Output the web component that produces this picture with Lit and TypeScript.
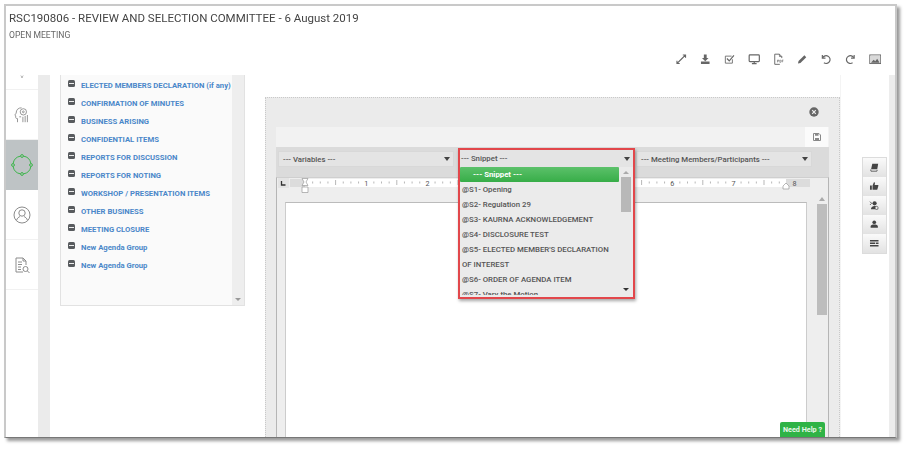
import { LitElement, html, css, svg } from "lit";
import { customElement } from "lit/decorators.js";

const agenda = [
  "ELECTED MEMBERS DECLARATION (if any)",
  "CONFIRMATION OF MINUTES",
  "BUSINESS ARISING",
  "CONFIDENTIAL ITEMS",
  "REPORTS FOR DISCUSSION",
  "REPORTS FOR NOTING",
  "WORKSHOP / PRESENTATION ITEMS",
  "OTHER BUSINESS",
  "MEETING CLOSURE",
  "New Agenda Group",
  "New Agenda Group",
];

const snippets = [
  "@S1- Opening",
  "@S2- Regulation 29",
  "@S3- KAURNA ACKNOWLEDGEMENT",
  "@S4- DISCLOSURE TEST",
  "@S5- ELECTED MEMBER'S DECLARATION OF INTEREST",
  "@S6- ORDER OF AGENDA ITEM",
  "@S7- Vary the Motion",
];

const toolIcons = [
  svg`<path d="M8 8l5-5M10 2.5h3.5V6M8 8l-5 5M2.5 10v3.5H6" fill="none" stroke="currentColor" stroke-width="1.4"/>`,
  svg`<path d="M6.2 2h3.6v4.5h2.4L8 10.5 3.8 6.5h2.4zM2.5 11h11v3h-11z" fill="currentColor"/>`,
  svg`<path d="M12 8v5H3V4h8" fill="none" stroke="currentColor" stroke-width="1.1"/><path d="M5 7l3 3 6-7" fill="none" stroke="currentColor" stroke-width="1.5"/>`,
  svg`<rect x="1.5" y="2.5" width="13" height="8.5" rx="1" fill="none" stroke="currentColor" stroke-width="1.5"/><path d="M5 13.5h6M8 11v2.5" stroke="currentColor" stroke-width="1.5"/>`,
  svg`<path d="M10 14.5H3.5v-13h6l3 3v2" fill="none" stroke="currentColor" stroke-width="1.2"/><path d="M9.5 1.5v3h3" fill="none" stroke="currentColor"/><rect x="6.5" y="8.2" width="8.5" height="4.6" fill="#fff"/><path d="M7 9v3M7 9h1.6v1.4H7M10 9v3h1c.8 0 .8-3 0-3zM13 12V9h1.6M13 10.4h1.3" fill="none" stroke="currentColor" stroke-width=".75"/>`,
  svg`<path d="M2.5 13.5l.8-3.2 7.4-7.4 2.4 2.4-7.4 7.4z" fill="currentColor"/>`,
  svg`<path d="M3 2.5v4h4" fill="none" stroke="currentColor" stroke-width="1.5"/><path d="M3.4 6.2A5 5 0 1 1 5 12.5" fill="none" stroke="currentColor" stroke-width="1.5"/>`,
  svg`<path d="M13 2.5v4H9" fill="none" stroke="currentColor" stroke-width="1.5"/><path d="M12.6 6.2A5 5 0 1 0 11 12.5" fill="none" stroke="currentColor" stroke-width="1.5"/>`,
  svg`<rect x="1" y="2.5" width="14" height="11" fill="none" stroke="currentColor" stroke-width="1.2"/><rect x="2" y="3.5" width="12" height="9" fill="#d9d9d9"/><path d="M2.5 12.5l3.5-4 2 2 2.5-3 3 5z" fill="currentColor"/>`,
];

const sideIcons = [
  svg`<path d="M5 2.500h9l-1.500 8.500H3.200z" fill="currentColor"/><path d="M2.500 11.500l.5 2.500h9l.5-2" fill="none" stroke="currentColor" stroke-width="1.200"/>`,
  svg`<path d="M1.500 7h2.800v6.500H1.500zM5.400 7l2.100-5c1.200 0 1.700.8 1.500 1.900L8.600 6H13.500c.7 0 1 .7.800 1.300L12.800 12.500c-.2.600-.6 1-1.200 1H5.400z" fill="currentColor"/>`,
  svg`<circle cx="8.500" cy="5" r="3.200" fill="currentColor"/><path d="M3 14c0-3 2-5 5.500-5s5.500 2 5.500 5z" fill="currentColor"/><path d="M1.500 2.500l2.500 2.500-2.500 2.500" fill="none" stroke="currentColor" stroke-width="1.300"/><circle cx="11.500" cy="12" r="2.400" fill="#eee" stroke="currentColor"/>`,
  svg`<circle cx="8" cy="5" r="2.800" fill="currentColor"/><path d="M2.500 13.500v-2c0-2 2.500-3 5.500-3s5.500 1 5.500 3v2z" fill="currentColor"/>`,
  svg`<path d="M1.500 3h13v2.200h-13zM1.500 6.900h8v2.200h-8zM10.700 6.900h3.800v2.200h-3.800zM1.500 10.800h13V13h-13z" fill="currentColor"/>`,
];

@customElement("app-root")
export class AppRoot extends LitElement {
  static styles = css`
    :host { display: block; width: 910px; height: 453px; background: #fff; overflow: hidden; font-family: Roboto, "Liberation Sans", sans-serif; }
    .window { position: relative; box-sizing: border-box; margin: 4px 0 0 4px; width: 893px; height: 434px; border: 2px solid #c9c9c9; border-bottom: 1px solid #777; background: #fff; box-shadow: 3px 3px 3px #9a9a9a; display: flex; flex-direction: column; filter: blur(0.35px); }
    .header { height: 69px; flex: none; position: relative; padding: 5px 0 0 3px; box-sizing: border-box; }
    .title { font-size: 11.5px; line-height: 15px; color: #444; white-space: nowrap; }
    .sub { font-size: 8.6px; line-height: 12px; margin-top: 3px; color: #666; }
    .tools { display: flex; justify-content: flex-end; gap: 11.7px; padding: 0 14px 0 0; margin-top: 12px; color: #666; }
    .tools svg { width: 12.5px; height: 12.5px; display: block; }
    .body { flex: 1; display: flex; min-height: 0; }
    .rail { width: 32px; flex: none; display: flex; flex-direction: column; }
    .cell { height: 50px; flex: none; box-sizing: border-box; border-bottom: 1px solid #f1f1f1; display: flex; align-items: center; justify-content: center; color: #8c8c8c; }
    .cell svg { width: 18px; height: 18px; display: block; }
    .cell.top { height: 15px; align-items: flex-start; font-size: 6px; color: #777; line-height: 4px; }
    .cell.sel { background: #bec3c5; border: none; }
    .cell.sel svg { width: 22px; height: 22px; }
    .strip { width: 12px; flex: none; background: #ebebeb; }
    .panel { width: 185px; height: 231px; flex: none; margin-left: 10px; box-sizing: border-box; border: 1px solid #e2e2e2; border-top: none; background: #fafafa; display: flex; }
    .list { flex: 1; min-width: 0; padding: 4px 0 0 7px; }
    .row { height: 18px; display: flex; gap: 6px; align-items: flex-start; }
    .minus { width: 7px; height: 7px; margin-top: 1px; flex: none; border-radius: 1.5px; background: #585b5e; display: flex; align-items: center; justify-content: center; }
    .minus i { display: block; width: 5px; height: 1.2px; background: #eee; }
    .row a { font-size: 7.7px; line-height: 14px; font-weight: 700; color: #4a87c9; white-space: nowrap; }
    .pscroll { width: 12px; flex: none; background: #eeeeee; display: flex; align-items: flex-end; justify-content: center; padding-bottom: 4px; box-sizing: border-box; }
    .pscroll b { border: 3px solid transparent; border-top: 3.5px solid #999; border-bottom: 0; }
    .editor { width: 575px; flex: none; margin: 22px 0 0 20px; box-sizing: border-box; background: #ebebeb; border: 1px dotted #c9c9c9; border-bottom: none; padding: 0 10px; display: flex; flex-direction: column; position: relative; }
    .close { height: 29px; flex: none; display: flex; justify-content: flex-end; align-items: center; padding: 0 10px 2px 0; box-sizing: border-box; }
    .close svg { width: 10px; height: 10px; display: block; }
    .save { height: 20px; flex: none; background: #f2f2f2; display: flex; justify-content: flex-end; padding-right: 1px; }
    .save div { width: 23px; background: #fbfbfb; display: flex; align-items: center; justify-content: center; color: #888; }
    .save svg { width: 8px; height: 8px; }
    .band { height: 30px; flex: none; background: #dbdbdb; display: flex; gap: 4px; padding: 4px 0 0 2px; box-sizing: border-box; }
    .sel-box { width: 176px; height: 16px; box-sizing: border-box; background: #e4e4e4; border: 1px solid #d8d8d8; display: flex; align-items: center; justify-content: space-between; padding: 0 3px 0 4px; font-size: 7.8px; font-weight: 500; color: #555; }
    .sel-box + .sel-box + .sel-box { margin-left: -2px; }
    .tri { border: 3.2px solid transparent; border-top: 4.5px solid #444; border-bottom: 0; }
    .frame { flex: 1; min-height: 0; box-sizing: border-box; border: 1px solid #b5b5b5; border-bottom: none; border-top-color: #cfcfcf; background: #eeeeee; padding: 0; display: flex; flex-direction: column; }
    .ruler { height: 16px; flex: none; display: block; margin-bottom: 8px; }
    .doc { flex: 1; display: flex; min-height: 0; padding-left: 8px; }
    .page { width: 522px; flex: none; box-sizing: border-box; background: #fff; border-top: 1.5px solid #bbb; border-left: 1px solid #ccc; border-right: 1px solid #ccc; }
    .dscroll { width: 10px; flex: none; margin: -5px 0 0 10px; display: flex; flex-direction: column; align-items: center; }
    .dscroll .up { border: 3.5px solid transparent; border-bottom: 4px solid #aaa; border-top: 0; margin-bottom: 3px; }
    .dscroll .th { width: 10px; height: 111px; background: #bdbdbd; }
    .dd { position: absolute; left: 192px; top: 50px; width: 177px; height: 151px; box-sizing: border-box; border: 2px solid #e2474b; box-shadow: 1px 2px 3px rgba(0,0,0,.35); background: #e4e4e4; display: flex; flex-direction: column; z-index: 2; }
    .dd .head { height: 17px; flex: none; display: flex; align-items: center; justify-content: space-between; padding: 0 3px 0 1px; font-size: 7.8px; font-weight: 500; color: #555; }
    .dd .menu { flex: 1; min-height: 0; display: flex; background: #ebebeb; }
    .items { width: 159px; height: 128px; flex: none; overflow: hidden; }
    .opt { padding: 1.400px 2px 0; margin-bottom: -.8px; font-size: 7.8px; font-weight: 500; color: #555; line-height: 14.4px; }
    .opt.on { background: linear-gradient(#5cc16a, #37ad48); color: #fff; font-weight: 700; padding: 0 0 0 13px; margin: 0; border-radius: 1px; line-height: 15px; }
    .vbar { width: 10px; flex: none; margin-left: 2px; display: flex; flex-direction: column; align-items: center; position: relative; background: #ebebeb; padding-top: 4px; box-sizing: border-box; }
    .vbar .u { border: 3px solid transparent; border-bottom: 3.5px solid #aaa; border-top: 0; margin-bottom: 3px; }
    .vbar .t { width: 10px; height: 35px; background: #b8b8b8; }
    .vbar .d { margin-top: auto; margin-bottom: 6px; border: 3px solid transparent; border-top: 3.5px solid #333; border-bottom: 0; }
    .right { flex: 1; padding: 82px 0 0 21px; box-sizing: border-box; border-left: 1px solid #f4f4f4; }
    .btns { width: 25px; box-sizing: border-box; border: 1px solid #dcdcdc; display: flex; flex-direction: column; }
    .btns div { height: 19px; display: flex; align-items: center; justify-content: center; background: linear-gradient(#fafafa, #e2e2e2); color: #444; }
    .btns svg { width: 10.5px; height: 10.5px; display: block; }
    .rstrip { width: 6px; flex: none; background: #ededed; }
    .help { position: absolute; right: 70px; bottom: 0; width: 45px; height: 15px; border-radius: 2px 2px 0 0; background: #2fb346; color: #e9f7ea; font-size: 7.2px; font-weight: 700; line-height: 15px; text-align: center; z-index: 3; }
  `;

  private ruler() {
    const ticks = [];
    for (let k = 1; k < 63; k++) {
      if (k % 8 === 0) continue;
      const x = 28 + (k * 61.2) / 8;
      const tall = k % 8 === 4;
      ticks.push(svg`<path d="M${x} ${tall ? 2 : 3.5}V${tall ? 7 : 5.5}" stroke="#999" stroke-width=".7"/>`);
    }
    const nums = [1, 2, 6, 7, 8];
    return svg`<svg class="ruler" width="551" height="16" viewBox="0 0 551 16">
      <rect x="1" y="0" width="11" height="10" fill="#e4e4e4"/>
      <path d="M4.500 3v4h4" fill="none" stroke="#333" stroke-width="1.300"/>
      <rect x="13" y="1" width="15" height="8" fill="#dcdcdc"/>
      <rect x="28" y="1" width="481" height="8" fill="#fff"/>
      <rect x="509" y="1" width="24" height="8" fill="#dcdcdc"/>
      ${ticks}
      ${nums.map((n) => svg`<text x="${28 + n * 61.2}" y="7.500" font-size="7.200" text-anchor="middle" fill="#555" font-family="Roboto">${n}</text>`)}
      <path d="M25 .500h6l-2 3.500 2 3.500h-6l2-3.500zM25 9h6v5.500h-6z" fill="#fff" stroke="#999" stroke-width=".7"/>
      <path d="M506 8l3-3 3 3v3h-6z" fill="#fff" stroke="#999" stroke-width=".7"/>
    </svg>`;
  }

  render() {
    return html`<div class="window">
      <div class="header">
        <div class="title">RSC190806 - REVIEW AND SELECTION COMMITTEE - 6 August 2019</div>
        <div class="sub">OPEN MEETING</div>
        <div class="tools">${toolIcons.map((i) => html`<svg viewBox="0 0 16 16">${i}</svg>`)}</div>
      </div>
      <div class="body">
        <div class="rail">
          <div class="cell top">˅</div>
          <div class="cell"><svg viewBox="0 0 20 20" fill="none" stroke="currentColor" stroke-width="1"><path d="M5 18v-4c-1 0-2 0-2-1.500V11L2 10l1.500-2C3.500 4 6 2 9.500 2"/><circle cx="11.500" cy="6.500" r="3.500"/><circle cx="11.500" cy="6.500" r="1"/><path d="M11 12v6M13.500 11v7M16 10v8M7 12l2 0"/></svg></div>
          <div class="cell sel"><svg viewBox="0 0 22 22" fill="none" stroke="#3cb54a" stroke-width="1"><circle cx="11" cy="11" r="9" stroke-dasharray="11 3" stroke-dashoffset="-1.500"/><circle cx="11" cy="2" r="1.400" fill="#bec3c5"/><circle cx="11" cy="20" r="1.400" fill="#bec3c5"/><circle cx="2" cy="11" r="1.400" fill="#bec3c5"/><circle cx="20" cy="11" r="1.400" fill="#bec3c5"/></svg></div>
          <div class="cell"><svg viewBox="0 0 18 18" fill="none" stroke="currentColor" stroke-width="1"><circle cx="9" cy="9" r="8"/><circle cx="9" cy="7" r="3.200"/><path d="M3.500 14.500c.5-2.500 2.500-3.500 3.500-4M14.500 14.500c-.5-2.500-2.500-3.500-3.500-4"/></svg></div>
          <div class="cell"><svg viewBox="0 0 18 18" fill="none" stroke="currentColor" stroke-width="1"><path d="M10 16H3V2h7l3 3v4M10 2v3h3M5 6h4M5 8.500h4M5 11h3M5 13.500h3"/><circle cx="12.500" cy="13" r="2.500"/><path d="M14.500 15l2 2"/></svg></div>
        </div>
        <div class="strip"></div>
        <div class="panel">
          <div class="list">
            ${agenda.map((a) => html`<div class="row"><span class="minus"><i></i></span><a>${a}</a></div>`)}
          </div>
          <div class="pscroll"><b></b></div>
        </div>
        <div class="editor">
          <div class="close"><svg viewBox="0 0 10 10"><circle cx="5" cy="5" r="4.700" fill="#666"/><path d="M3.200 3.200l3.600 3.600M6.800 3.200l-3.600 3.600" stroke="#eee" stroke-width="1.200"/></svg></div>
          <div class="save"><div><svg viewBox="0 0 8 8"><path d="M.5.500h5.500l1.500 1.500v5.500h-7z" fill="none" stroke="currentColor"/><path d="M2 .5h3.500v2.200H2zM2 5h4v2.500H2z" fill="currentColor"/></svg></div></div>
          <div class="band">
            <div class="sel-box"><span>--- Variables ---</span><span class="tri"></span></div>
            <div class="sel-box"></div>
            <div class="sel-box"><span>--- Meeting Members/Participants ---</span><span class="tri"></span></div>
          </div>
          <div class="frame">
            ${this.ruler()}
            <div class="doc">
              <div class="page"></div>
              <div class="dscroll"><span class="up"></span><span class="th"></span></div>
            </div>
          </div>
          <div class="dd">
            <div class="head"><span>--- Snippet ---</span><span class="tri"></span></div>
            <div class="menu">
              <div class="items">
                <div class="opt on">--- Snippet ---</div>
                ${snippets.map((s) => html`<div class="opt">${s}</div>`)}
              </div>
              <div class="vbar"><span class="u"></span><span class="t"></span><span class="d"></span></div>
            </div>
          </div>
        </div>
        <div class="right">
          <div class="btns">${sideIcons.map((i) => html`<div><svg viewBox="0 0 16 16">${i}</svg></div>`)}</div>
        </div>
        <div class="rstrip"></div>
      </div>
      <div class="help">Need Help ?</div>
    </div>`;
  }
}
